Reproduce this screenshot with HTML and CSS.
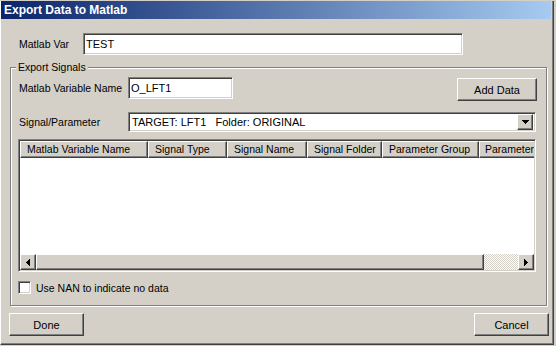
FILE: index.html
```html
<!DOCTYPE html>
<html lang="en">
<head>
    <meta charset="UTF-8">
    <title>Export Data to Matlab</title>
    <link rel="stylesheet" href="styles.css">
</head>
<body>
    <div class="window">
        <div class="titlebar">Export Data to Matlab</div>

        <div class="row var-row">
            <label class="lbl lbl-var">Matlab Var</label>
            <input class="field field-var" type="text" value="TEST">
        </div>

        <div class="group">
            <span class="group-title">Export Signals</span>

            <div class="row name-row">
                <label class="lbl lbl-wide">Matlab Variable Name</label>
                <input class="field field-name" type="text" value="O_LFT1">
                <button class="btn btn-add">Add Data</button>
            </div>

            <div class="row combo-row">
                <label class="lbl lbl-wide">Signal/Parameter</label>
                <div class="combo">
                    <span class="combo-text">TARGET: LFT1   Folder: ORIGINAL</span>
                    <span class="combo-btn">
                        <svg width="7" height="4" viewBox="0 0 7 4" shape-rendering="crispEdges"><path d="M0 0h7v1h-1v1h-1v1h-1v1h-1v-1h-1v-1h-1v-1h-1z" fill="#000"/></svg>
                    </span>
                </div>
            </div>

            <div class="list">
                <div class="list-header">
                    <div class="col c1">Matlab Variable Name</div>
                    <div class="col c2">Signal Type</div>
                    <div class="col c3">Signal Name</div>
                    <div class="col c4">Signal Folder</div>
                    <div class="col c5">Parameter Group</div>
                    <div class="col c6">Parameter</div>
                </div>
                <div class="list-body"></div>
                <div class="hscroll">
                    <span class="sb-btn">
                        <svg width="4" height="7" viewBox="0 0 4 7" shape-rendering="crispEdges"><path d="M3 0h1v7h-1v-1h-1v-1h-1v-1h-1v-1h1v-1h1v-1h1z" fill="#000"/></svg>
                    </span>
                    <span class="sb-thumb"></span>
                    <span class="sb-track"></span>
                    <span class="sb-btn">
                        <svg width="4" height="7" viewBox="0 0 4 7" shape-rendering="crispEdges"><path d="M0 0h1v1h1v1h1v1h1v1h-1v1h-1v1h-1v1h-1z" fill="#000"/></svg>
                    </span>
                </div>
            </div>

            <label class="check-row">
                <span class="checkbox"></span>
                Use NAN to indicate no data
            </label>
        </div>

        <div class="footer">
            <button class="btn btn-foot">Done</button>
            <button class="btn btn-foot">Cancel</button>
        </div>
    </div>
</body>
</html>
```

FILE: styles.css
```css
body {
    margin: 0;
    width: 556px;
    height: 346px;
    background-color: #d4d0c8;
    font-family: "Liberation Sans", Arial, sans-serif;
    font-size: 10.5px;
    color: #000;
    overflow: hidden;
}
.window {
    width: 554px;
    height: 344px;
    box-sizing: border-box;
    border-left: 1px solid #fff;
    border-right: 1px solid #404040;
    border-bottom: 1px solid #404040;
    box-shadow: inset -1px -1px #808080;
}
.titlebar {
    height: 18px;
    margin: 1px 2px 0 0;
    padding-left: 3px;
    line-height: 18px;
    font-weight: bold;
    font-size: 12px;
    color: #fff;
    background: linear-gradient(to right, #0a246a, #a6caf0);
}
.row {
    display: flex;
    align-items: center;
}
.var-row {
    margin-top: 14px;
    padding-left: 18px;
}
.lbl-var {
    width: 64px;
}
.lbl-wide {
    width: 109px;
    padding-left: 1px;
}

/* sunken edit fields */
.field, .combo, .checkbox {
    box-sizing: border-box;
    border: 1px solid;
    border-color: #808080 #fff #fff #808080;
    box-shadow: inset 1px 1px #404040, inset -1px -1px #d4d0c8;
    background: #fff;
}
.field {
    height: 22px;
    margin: 0;
    padding: 0 2px;
    font-family: inherit;
    font-size: 11px;
    color: #000;
    outline: none;
}
.field-var {
    width: 380px;
}
.field-name {
    width: 105px;
}

/* raised buttons */
.btn, .sb-btn, .sb-thumb, .combo-btn, .col {
    box-sizing: border-box;
    border: 1px solid;
    border-color: #fff #404040 #404040 #fff;
    box-shadow: inset -1px -1px #808080, inset 1px 1px #d4d0c8;
    background: #d4d0c8;
}
.btn {
    height: 23px;
    padding: 0;
    font-family: inherit;
    font-size: 11px;
    color: #000;
}
.btn-add {
    width: 80px;
    margin-left: auto;
    margin-top: 1px;
}

.group {
    position: relative;
    box-sizing: border-box;
    width: 537px;
    height: 239px;
    margin: 12px 0 0 9px;
    padding: 9px 9px 0 7px;
    border: 1px solid #808080;
    box-shadow: inset 1px 1px #fff, 1px 1px #fff;
}
.group-title {
    position: absolute;
    top: -8px;
    left: 5px;
    padding: 0 2px;
    line-height: 14px;
    background: #d4d0c8;
}
.name-row {
    align-items: flex-start;
    height: 24px;
}
.name-row .lbl {
    line-height: 22px;
}
.combo-row {
    margin-top: 11px;
}
.combo {
    display: flex;
    align-items: center;
    width: 408px;
    height: 20px;
    padding: 2px;
    font-size: 11px;
}
.combo-text {
    flex: 1;
    white-space: pre;
    padding-left: 1px;
}
.combo-btn {
    display: flex;
    align-items: center;
    justify-content: center;
    width: 16px;
    height: 16px;
}

.list {
    box-sizing: border-box;
    width: 518px;
    height: 133px;
    margin-top: 7px;
    display: flex;
    flex-direction: column;
    border: 1px solid;
    border-color: #808080 #fff #fff #808080;
    box-shadow: inset 1px 1px #404040, inset -1px -1px #d4d0c8;
    padding: 1px;
    background: #fff;
}
.list-header {
    display: flex;
    height: 17px;
    overflow: hidden;
    flex-shrink: 0;
}
.col {
    flex-shrink: 0;
    height: 17px;
    line-height: 15px;
    padding-left: 6px;
    white-space: nowrap;
    overflow: hidden;
}
.c1 { width: 128px; }
.c2 { width: 79px; }
.c3 { width: 80px; }
.c4 { width: 75px; }
.c5 { width: 97px; }
.c6 { width: 100px; padding-left: 5px; }
.list-body {
    flex: 1;
}
.hscroll {
    display: flex;
    height: 16px;
    flex-shrink: 0;
}
.sb-btn {
    display: flex;
    align-items: center;
    justify-content: center;
    width: 16px;
    height: 16px;
    flex-shrink: 0;
}
.sb-thumb {
    width: 448px;
    height: 16px;
    flex-shrink: 0;
}
.sb-track {
    flex: 1;
    background: repeating-conic-gradient(#fff 0 25%, #d4d0c8 0 50%) 0 0 / 2px 2px;
}

.check-row {
    display: flex;
    align-items: center;
    margin-top: 9px;
    height: 13px;
}
.checkbox {
    width: 13px;
    height: 13px;
    margin-right: 5px;
}

.footer {
    display: flex;
    justify-content: space-between;
    margin-top: 7px;
    padding: 0 4px 0 8px;
}
.btn-foot {
    width: 75px;
}
```
